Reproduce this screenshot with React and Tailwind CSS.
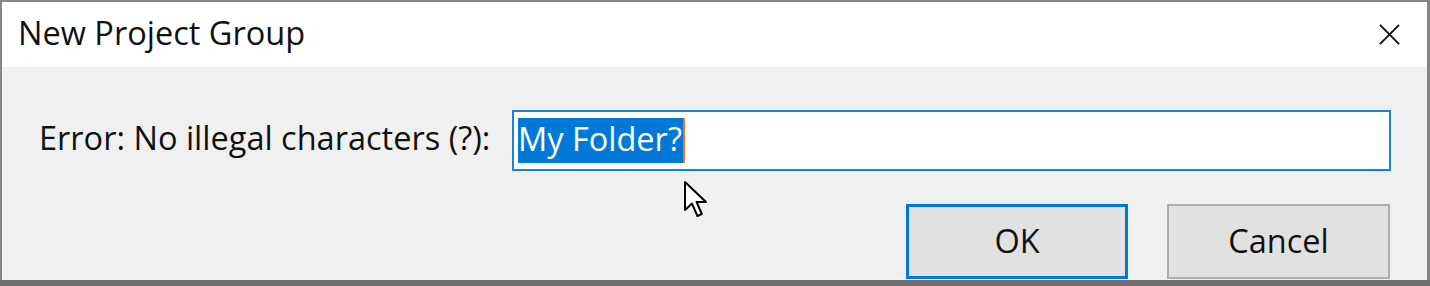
import React from "react";

function Cursor() {
  return (
    <svg width="28" height="40" viewBox="0 0 14 20" className="absolute left-[683px] top-[180px]">
      <path d="M1 1 L1 15 L4.5 11.8 L7.2 18 L9.4 17 L6.8 11 L11.5 11 Z" fill="#fff" stroke="#000" strokeWidth="1" strokeLinejoin="round" />
    </svg>
  );
}

export default function App() {
  return (
    <div className="relative w-[1430px] h-[286px] bg-[#6e6e6e] overflow-hidden" style={{ fontFamily: '"Open Sans", "Noto Sans", sans-serif' }}>
      <div className="flex flex-col w-[1430px] h-[280px] pt-[2px] pl-[2px] pr-[3px] bg-[#858585]">
        <div className="flex items-center justify-between h-[65px] bg-white pl-[16px] pr-[26px]">
          <span className="text-[32.5px] text-[#111] leading-none pb-[2px]">New Project Group</span>
          <svg width="23" height="23" viewBox="0 0 24 24">
            <path d="M2 2 L22 22 M22 2 L2 22" stroke="#111" strokeWidth="2" />
          </svg>
        </div>
        <div className="flex flex-col flex-1 bg-[#f0f0f0] pl-[37px] pr-[37px] pt-[43px]">
          <div className="flex items-center">
            <span className="text-[32.5px] text-[#111] leading-none w-[473px] shrink-0 pb-[5px]">Error: No illegal characters (?):</span>
            <div className="flex items-center flex-1 h-[61px] bg-white border-2 border-[#1883d7] px-[4px] mr-[-1px]">
              <span className="flex items-center h-[45px] bg-[#0078d7] text-white text-[32.5px] leading-none pr-[1px] pb-[3px] border-r-2 border-[#e8762d]">My Folder?</span>
            </div>
          </div>
          <div className="flex justify-end gap-[39px] mt-[33px]">
            <button className="w-[222px] h-[75px] bg-[#e1e1e1] border-[3px] border-[#0078d7] text-[32.5px] text-[#111]">OK</button>
            <button className="w-[223px] h-[75px] bg-[#e1e1e1] border-2 border-[#adadad] text-[32.5px] text-[#111]">Cancel</button>
          </div>
        </div>
      </div>
      <Cursor />
    </div>
  );
}
